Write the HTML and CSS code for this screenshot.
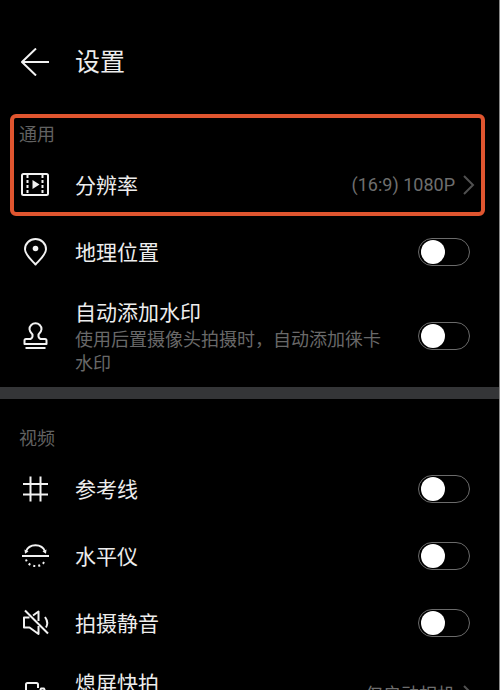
FILE: index.html
```html
<!DOCTYPE html>
<html lang="zh-CN">
<head>
    <meta charset="UTF-8">
    <meta name="viewport" content="width=device-width, initial-scale=1.0">
    <title>设置</title>
    <link rel="stylesheet" href="styles.css">
</head>
<body>

<header class="header">
    <button class="back" type="button" aria-label="返回">
        <svg class="icon" viewBox="0 0 28 28"><path d="M28 14H1M15 0.5L1 14L15 27.5"/></svg>
    </button>
    <h1>设置</h1>
</header>

<main>
    <section>
        <div class="highlight">
            <h2>通用</h2>
            <button class="row row-link" type="button">
                <svg class="icon" viewBox="0 0 28 28">
                    <rect x="1" y="3" width="26" height="21" rx="1.5"/>
                    <path d="M6.500 4V24M21.500 4V24" stroke-dasharray="3 2"/>
                    <path class="solid" d="M11.500 9L18.500 13.500L11.500 18Z"/>
                </svg>
                <span class="text"><span class="name">分辨率</span></span>
                <span class="value">(16:9) 1080P</span>
                <svg class="chevron" viewBox="0 0 12 20"><path d="M1 1L10 10L1 19"/></svg>
            </button>
        </div>

        <label class="row">
            <svg class="icon" viewBox="0 0 28 28">
                <path d="M14.500 26.500C11.500 23 4 17 4 11.200A10.500 10.200 0 0 1 25 11.200C25 17 17.500 23 14.500 26.500Z"/>
                <circle class="solid" cx="14.500" cy="10.500" r="2.800"/>
            </svg>
            <span class="text"><span class="name">地理位置</span></span>
            <input class="switch" type="checkbox" role="switch">
        </label>

        <label class="row">
            <svg class="icon" viewBox="0 0 28 28">
                <path d="M3.500 22V18.500Q3.500 17 5 17H9.500Q12 16 11.500 12.500C9.500 10.500 8.500 9 8.500 7.200A6 6 0 0 1 20.500 7.200C20.500 9 19.500 10.500 17.500 12.500Q17 16 19.500 17H24Q25.500 17 25.500 18.500V22Z"/>
                <path d="M4.500 26H24.500"/>
            </svg>
            <span class="text">
                <span class="name">自动添加水印</span>
                <span class="hint">使用后置摄像头拍摄时，自动添加徕卡水印</span>
            </span>
            <input class="switch" type="checkbox" role="switch">
        </label>
    </section>

    <section class="divided">
        <h2>视频</h2>

        <label class="row">
            <svg class="icon" viewBox="0 0 28 28"><path d="M9.500 1.500V26.500M19.500 1.500V26.500M2 9H27M2 19.500H27"/></svg>
            <span class="text"><span class="name">参考线</span></span>
            <input class="switch" type="checkbox" role="switch">
        </label>

        <label class="row">
            <svg class="icon" viewBox="0 0 28 28">
                <path d="M1 14H28"/>
                <path d="M5 9.500A10 9 0 0 1 24 9.500"/>
                <path class="solid" d="M3.500 7.500L7.500 9.500L4 11.800ZM25.500 7.500L21.500 9.500L25 11.800Z"/>
                <path d="M5 17.500A10 8.500 0 0 0 24.500 17.500" stroke-dasharray="2 3"/>
            </svg>
            <span class="text"><span class="name">水平仪</span></span>
            <input class="switch" type="checkbox" role="switch">
        </label>

        <label class="row">
            <svg class="icon" viewBox="0 0 28 28">
                <path d="M4 1.500L27 24.500"/>
                <path d="M12 6.500L17.500 2.500V12"/>
                <path d="M8.500 8.500H3V18.500H8.500L17.500 25V17"/>
                <path d="M24 8Q28 13.500 25 18.500"/>
            </svg>
            <span class="text"><span class="name">拍摄静音</span></span>
            <input class="switch" type="checkbox" role="switch">
        </label>

        <button class="row row-link" type="button">
            <svg class="icon" viewBox="0 0 28 28">
                <path d="M17 7V3.500Q17 2 15.500 2H6.500Q5 2 5 3.500V24.500Q5 26 6.500 26H13"/>
                <path d="M15 10V23H27V10H24L23 7.500H20L19 10Z"/>
                <circle cx="21" cy="17" r="3"/>
            </svg>
            <span class="text">
                <span class="name">熄屏快拍</span>
                <span class="hint">双击音量下键</span>
            </span>
            <span class="value">仅启动相机</span>
            <svg class="chevron" viewBox="0 0 12 20"><path d="M1 1L10 10L1 19"/></svg>
        </button>
    </section>
</main>

</body>
</html>
```
FILE: styles.css
```css
* {
    box-sizing: border-box;
}
body {
    height: 100vh;
    margin: 0;
    overflow: hidden;
    background-color: black;
    border-right: 1px solid #8a8a8a;
    color: #ededed;
    font-family: Roboto, "Noto Sans CJK SC", sans-serif;
}
button {
    background: none;
    border: none;
    color: inherit;
    font: inherit;
    text-align: left;
    cursor: pointer;
}
h1, h2 {
    margin: 0;
    font-weight: normal;
}
.header {
    display: flex;
    align-items: center;
    gap: 26px;
    height: 95px;
    padding: 28px 21px 0;
}
.header h1 {
    padding-top: 3px;
    font-size: 25px;
    line-height: 36px;
}
.back {
    display: flex;
    padding: 0;
}
h2 {
    padding: 28px 19px 4px;
    color: #626262;
    font-size: 18px;
    line-height: 24px;
}
.highlight {
    position: relative;
}
/* Frame drawn over the resolution setting */
.highlight::after {
    content: "";
    position: absolute;
    inset: 19px 14px 2px 10px;
    border: 4px solid #e0552f;
    border-radius: 6px;
    pointer-events: none;
}
.divided {
    border-top: 12px solid #343537;
}
.row {
    display: flex;
    align-items: center;
    width: 100%;
    min-height: 67px;
    padding: 11px 29px 11px 21px;
    cursor: pointer;
}
.row-link {
    padding-right: 24px;
}
.icon {
    flex: none;
    width: 28px;
    height: 28px;
    fill: none;
    stroke: #f2f2f2;
    stroke-width: 2;
    stroke-linejoin: round;
}
.icon .solid {
    fill: #f2f2f2;
    stroke: none;
}
.text {
    flex: 1;
    margin: 0 30px 0 26px;
    padding-top: 2px;
}
.name, .hint {
    display: block;
}
.name {
    font-size: 21px;
    line-height: 30px;
}
.hint {
    color: #696969;
    font-size: 18px;
    line-height: 24px;
}
.value {
    color: #6e6e6e;
    font-size: 18px;
    line-height: 24px;
}
.chevron {
    flex: none;
    width: 12px;
    height: 20px;
    margin-left: 8px;
    fill: none;
    stroke: #505050;
    stroke-width: 2;
}
.switch {
    appearance: none;
    display: flex;
    align-items: center;
    flex: none;
    width: 52px;
    height: 28px;
    margin: 0;
    padding: 0 2px;
    border: 1px solid #6b6b6b;
    border-radius: 14px;
    cursor: pointer;
}
.switch::before {
    content: "";
    width: 24px;
    height: 24px;
    border-radius: 50%;
    background-color: white;
}
.switch:checked {
    justify-content: flex-end;
    background-color: #e0552f;
}
```
